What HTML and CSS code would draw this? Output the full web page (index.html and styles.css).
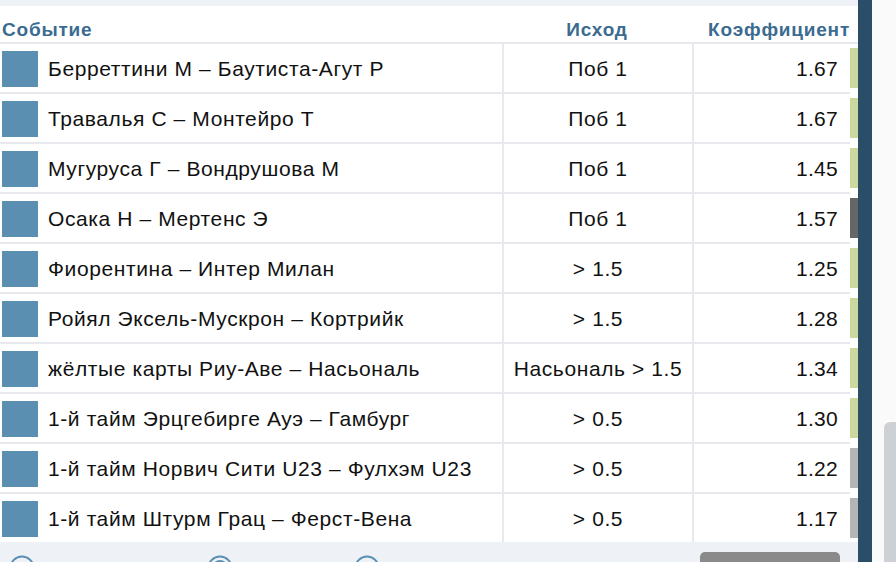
FILE: index.html
```html
<!DOCTYPE html>
<html lang="ru">
<head>
    <meta charset="UTF-8">
    <meta name="viewport" content="width=device-width, initial-scale=1.0">
    <title>Купон</title>
    <link rel="stylesheet" href="styles.css">
</head>
<body>
    <div class="layout">
        <div class="panel">
            <div class="top-strip"></div>

            <div class="head-row">
                <div class="head-cell col-event">Событие</div>
                <div class="head-cell col-outcome">Исход</div>
                <div class="head-cell col-odds">Коэффициент</div>
                <div class="head-cell col-mark"></div>
            </div>

            <div class="bet-row">
                <div class="cell col-event"><span class="sport-icon"></span>Берреттини М – Баутиста-Агут Р</div>
                <div class="cell col-outcome">Поб 1</div>
                <div class="cell col-odds">1.67</div>
                <div class="col-mark"><span class="mark mark-green"></span></div>
            </div>
            <div class="bet-row">
                <div class="cell col-event"><span class="sport-icon"></span>Травалья С – Монтейро Т</div>
                <div class="cell col-outcome">Поб 1</div>
                <div class="cell col-odds">1.67</div>
                <div class="col-mark"><span class="mark mark-green"></span></div>
            </div>
            <div class="bet-row">
                <div class="cell col-event"><span class="sport-icon"></span>Мугуруса Г – Вондрушова М</div>
                <div class="cell col-outcome">Поб 1</div>
                <div class="cell col-odds">1.45</div>
                <div class="col-mark"><span class="mark mark-green"></span></div>
            </div>
            <div class="bet-row">
                <div class="cell col-event"><span class="sport-icon"></span>Осака Н – Мертенс Э</div>
                <div class="cell col-outcome">Поб 1</div>
                <div class="cell col-odds">1.57</div>
                <div class="col-mark"><span class="mark mark-dark"></span></div>
            </div>
            <div class="bet-row">
                <div class="cell col-event"><span class="sport-icon"></span>Фиорентина – Интер Милан</div>
                <div class="cell col-outcome">&gt; 1.5</div>
                <div class="cell col-odds">1.25</div>
                <div class="col-mark"><span class="mark mark-green"></span></div>
            </div>
            <div class="bet-row">
                <div class="cell col-event"><span class="sport-icon"></span>Ройял Эксель-Мускрон – Кортрийк</div>
                <div class="cell col-outcome">&gt; 1.5</div>
                <div class="cell col-odds">1.28</div>
                <div class="col-mark"><span class="mark mark-green"></span></div>
            </div>
            <div class="bet-row">
                <div class="cell col-event"><span class="sport-icon"></span>жёлтые карты Риу-Аве – Насьональ</div>
                <div class="cell col-outcome">Насьональ &gt; 1.5</div>
                <div class="cell col-odds">1.34</div>
                <div class="col-mark"><span class="mark mark-green"></span></div>
            </div>
            <div class="bet-row">
                <div class="cell col-event"><span class="sport-icon"></span>1-й тайм Эрцгебирге Ауэ – Гамбург</div>
                <div class="cell col-outcome">&gt; 0.5</div>
                <div class="cell col-odds">1.30</div>
                <div class="col-mark"><span class="mark mark-green"></span></div>
            </div>
            <div class="bet-row">
                <div class="cell col-event"><span class="sport-icon"></span>1-й тайм Норвич Сити U23 – Фулхэм U23</div>
                <div class="cell col-outcome">&gt; 0.5</div>
                <div class="cell col-odds">1.22</div>
                <div class="col-mark"><span class="mark mark-grey"></span></div>
            </div>
            <div class="bet-row last">
                <div class="cell col-event"><span class="sport-icon"></span>1-й тайм Штурм Грац – Ферст-Вена</div>
                <div class="cell col-outcome">&gt; 0.5</div>
                <div class="cell col-odds">1.17</div>
                <div class="col-mark"><span class="mark mark-grey"></span></div>
            </div>

            <div class="footer">
                <div class="footer-icons">
                    <svg class="ficon" width="26" height="26" viewBox="0 0 26 26"><circle cx="13" cy="13" r="11.5" fill="none" stroke="#5a8fb2" stroke-width="2"/></svg>
                    <svg class="ficon ficon-mid" width="26" height="26" viewBox="0 0 26 26"><circle cx="13" cy="13" r="11.5" fill="none" stroke="#5a8fb2" stroke-width="2"/><circle cx="13" cy="13" r="7" fill="none" stroke="#5a8fb2" stroke-width="2"/></svg>
                    <svg class="ficon ficon-last" width="26" height="26" viewBox="0 0 26 26"><circle cx="13" cy="13" r="11.5" fill="none" stroke="#5a8fb2" stroke-width="2"/></svg>
                </div>
                <div class="footer-button"></div>
            </div>
        </div>

        <div class="divider"></div>

        <div class="scroll-zone">
            <div class="scroll-thumb"></div>
        </div>
    </div>
</body>
</html>
```

FILE: styles.css
```css
html, body {
    margin: 0;
    padding: 0;
    height: 100%;
    overflow: hidden;
}
body {
    font-family: "Liberation Sans", Arial, sans-serif;
    background: #fafafa;
    color: #111;
}
.layout {
    display: flex;
    height: 562px;
}
.panel {
    width: 858px;
    background: #fff;
    display: flex;
    flex-direction: column;
}
.panel > * {
    flex-shrink: 0;
}
.top-strip {
    height: 6px;
    background: #eef2f7;
}
.head-row {
    display: flex;
    height: 36px;
    border-bottom: 2px solid #e8e9ee;
}
.head-cell {
    display: flex;
    align-items: flex-end;
    padding-bottom: 1px;
    box-sizing: border-box;
    font-size: 19px;
    letter-spacing: 0.8px;
    font-weight: bold;
    color: #3b6b90;
}
.head-row .col-event {
    padding-left: 2px;
}
.head-row .col-outcome {
    justify-content: center;
}
.head-row .col-odds {
    justify-content: flex-end;
}
.col-event {
    width: 502px;
}
.col-outcome {
    width: 190px;
}
.col-odds {
    width: 158px;
}
.col-mark {
    width: 8px;
}
.bet-row {
    display: flex;
    height: 50px;
}
.cell {
    display: flex;
    align-items: center;
    box-sizing: border-box;
    height: 50px;
    padding-top: 1px;
    border-bottom: 2px solid #e8e9ee;
    font-size: 21px;
    letter-spacing: 0.6px;
}
.bet-row .col-outcome,
.bet-row .col-odds {
    border-left: 2px solid #e8e9ee;
}
.bet-row .col-event {
    padding-left: 2px;
}
.bet-row .col-outcome {
    justify-content: center;
}
.bet-row .col-odds {
    justify-content: flex-end;
    padding-right: 12px;
    letter-spacing: 0.3px;
}
.bet-row.last,
.bet-row.last .cell {
    height: 48px;
    border-bottom: none;
}
.sport-icon {
    width: 36px;
    height: 36px;
    background: #5a8fb2;
    margin-right: 10px;
    flex-shrink: 0;
}
.bet-row .col-mark {
    padding-top: 4px;
}
.mark {
    display: block;
    width: 8px;
    height: 40px;
}
.mark-green {
    background: #cbd89e;
}
.mark-dark {
    background: #666;
}
.mark-grey {
    background: #b5b5b5;
}
.footer {
    flex: 1 1 auto;
    min-height: 0;
    overflow: hidden;
    background: #eef2f7;
    display: flex;
    justify-content: space-between;
    padding: 0 18px 0 9px;
}
.footer-icons {
    display: flex;
    align-items: flex-start;
    padding-top: 13px;
}
.ficon {
    flex-shrink: 0;
}
.ficon-mid {
    margin-left: 172px;
}
.ficon-last {
    margin-left: 121px;
}
.footer-button {
    width: 140px;
    height: 20px;
    margin-top: 10px;
    background: #8a8a8a;
    border-radius: 5px 5px 0 0;
}
.divider {
    width: 14px;
    background: #2a4d68;
}
.scroll-zone {
    flex: 1;
    background: #fafafa;
    display: flex;
    justify-content: flex-end;
}
.scroll-thumb {
    width: 12px;
    margin-top: 422px;
    background: #cdd1d5;
    border-radius: 6px 0 0 0;
}
```
